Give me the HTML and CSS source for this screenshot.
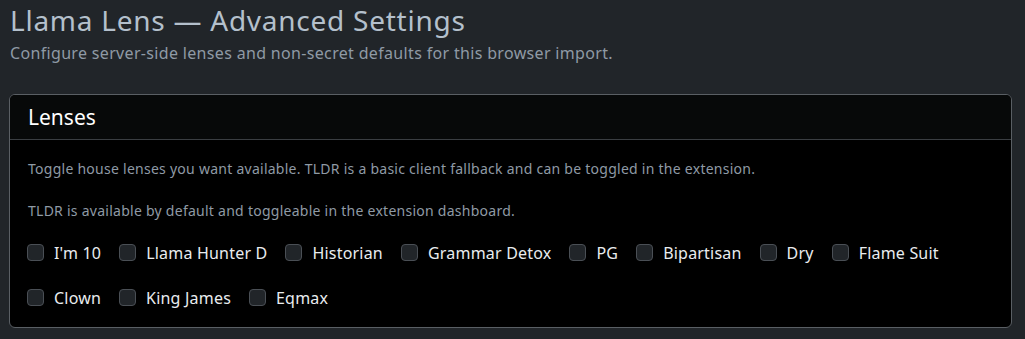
FILE: index.html
```html
<!DOCTYPE html>
<html>
<head>
  <title>Llama Lens — Advanced Settings</title>
  <link rel="stylesheet" href="styles.css">
</head>
<body>

<div class="page">
  <h1 class="title">Llama Lens — Advanced Settings</h1>
  <p class="subtitle">Configure server-side lenses and non-secret defaults for this browser import.</p>

  <div class="card">
    <div class="card-header">Lenses</div>
    <div class="card-body">
      <p class="note">Toggle house lenses you want available. TLDR is a basic client fallback and can be toggled in the extension.</p>
      <p class="note last">TLDR is available by default and toggleable in the extension dashboard.</p>
      <div class="lens-list">
        <label class="lens"><input type="checkbox"> I'm 10</label>
        <label class="lens"><input type="checkbox"> Llama Hunter D</label>
        <label class="lens"><input type="checkbox"> Historian</label>
        <label class="lens"><input type="checkbox"> Grammar Detox</label>
        <label class="lens"><input type="checkbox"> PG</label>
        <label class="lens"><input type="checkbox"> Bipartisan</label>
        <label class="lens"><input type="checkbox"> Dry</label>
        <label class="lens"><input type="checkbox"> Flame Suit</label>
        <label class="lens"><input type="checkbox"> Clown</label>
        <label class="lens"><input type="checkbox"> King James</label>
        <label class="lens"><input type="checkbox"> Eqmax</label>
      </div>
    </div>
  </div>
</div>

</body>
</html>
```

FILE: styles.css
```css
body {
  margin: 0;
  background: #212529;
  color: #dee2e6;
  font-family: "Noto Sans", "Open Sans", sans-serif;
}
.page {
  padding: 0 13px 0 9px;
}
.title {
  margin: 0;
  padding: 2px 0 0 1px;
  font-size: 28px;
  font-weight: 400;
  line-height: 36px;
  letter-spacing: 0.75px;
  color: #b4c0cc;
}
.subtitle {
  margin: 3px 0 0 1px;
  font-size: 16px;
  line-height: 24px;
  letter-spacing: 0.33px;
  color: #8f9aa5;
}
.card {
  margin-top: 29px;
  background: #000;
  border: 1px solid #5a5f64;
  border-radius: 6px;
  overflow: hidden;
}
.card-header {
  padding: 0 18px;
  height: 44px;
  line-height: 44px;
  font-size: 21px;
  color: #fff;
  background: #070909;
  border-bottom: 1px solid #3a3e42;
}
.card-body {
  padding: 17px 18px 7px 17px;
}
.note {
  margin: 0 0 18px 1px;
  font-size: 14px;
  line-height: 24px;
  letter-spacing: 0.26px;
  color: #8f9aa5;
}
.note.last {
  margin-bottom: 7px;
}
.lens-list {
  display: flex;
  flex-wrap: wrap;
  column-gap: 18px;
}
.lens {
  display: flex;
  align-items: center;
  gap: 10px;
  height: 45px;
  font-size: 16px;
  letter-spacing: 0.2px;
  color: #e9ecef;
}
.lens input {
  appearance: none;
  margin: 0;
  width: 17px;
  height: 17px;
  border: 1px solid #4a4f55;
  border-radius: 4px;
  background: #212529;
}
```
